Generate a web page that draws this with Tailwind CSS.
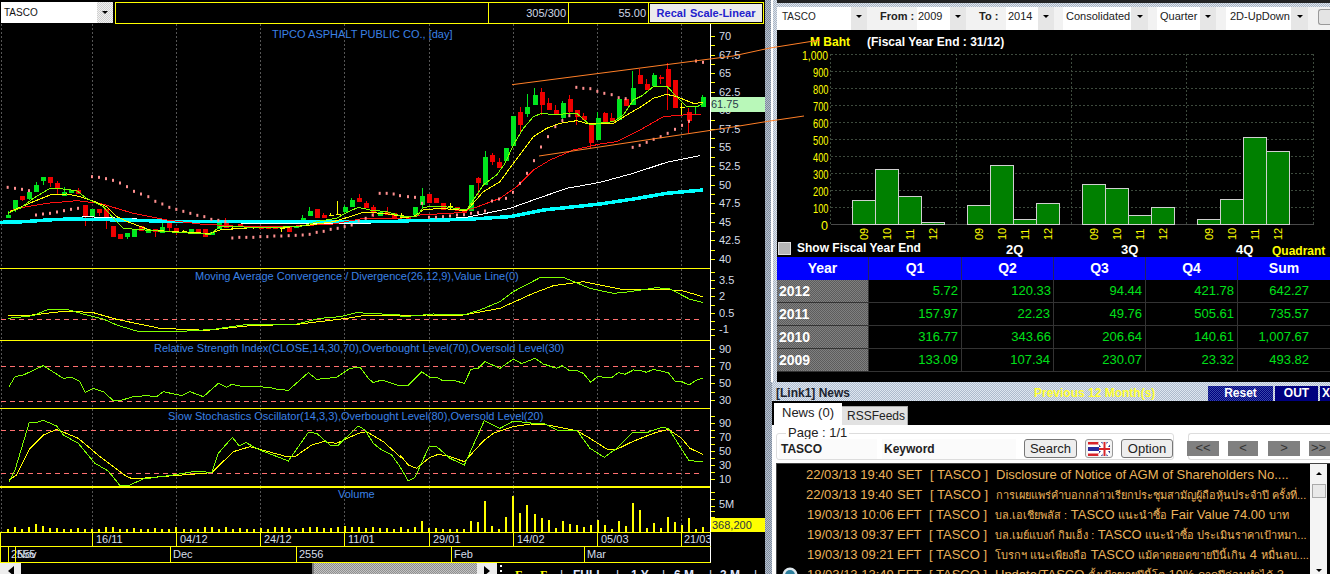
<!DOCTYPE html>
<html lang="en">
<head>
    <meta charset="UTF-8">
    <title>TASCO - Chart</title>
    <script src="https://cdn.jsdelivr.net/npm/@tailwindcss/browser@4"></script>
</head>
<body class="bg-black">
<div class="relative flex w-[1330px] h-[574px] overflow-hidden bg-black font-['Liberation_Sans','Noto_Sans',sans-serif] text-[11px]">

    <!-- left: price chart -->
    <div class="w-[765px] shrink-0 flex flex-col">
        <div class="h-[24px] flex items-start pt-[2px] pl-[1px] gap-[2px]">
            <div class="w-[112px] h-[21px] bg-white flex items-center justify-between text-[10px] text-[#111]">
                <span class="pl-[3px]">TASCO</span>
                <span class="w-[16px] h-full bg-[repeating-conic-gradient(#cfcfcf_0_25%,#f2f2f2_0_50%)] bg-[length:2px_2px] flex items-center justify-center"><i class="block border-x-[3px] border-t-[3px] border-x-transparent border-t-black"></i></span>
            </div>
            <div class="w-[649px] h-[22px] border border-[#ffff00] flex text-[#cfd8e6]">
                <div class="w-[373px] border-r border-[#ffff00]"></div>
                <div class="w-[80px] border-r border-[#ffff00] flex items-center justify-end pr-[2px]">305/300</div>
                <div class="w-[80px] border-r border-[#ffff00] flex items-center justify-end pr-[2px]">55.00</div>
                <div class="flex-1 m-[1px] bg-[#ececec] flex items-center justify-center font-bold text-[#2222cc] [word-spacing:1px]">Recal Scale-Linear</div>
            </div>
        </div>

        <svg id="pMain" class="block shrink-0" width="765" height="245" viewBox="0 24 765 245" font-size="11">
            <text x="272" y="38" fill="#3b82e6">TIPCO ASPHALT PUBLIC CO., [day]</text>
        </svg>
        <svg id="pMacd" class="block shrink-0" width="765" height="72" viewBox="0 269 765 72" font-size="11">
            <text x="195" y="280" fill="#3b82e6">Moving Average Convergence / Divergence(26,12,9),Value Line(0)</text>
        </svg>
        <svg id="pRsi" class="block shrink-0" width="765" height="68" viewBox="0 341 765 68" font-size="11">
            <text x="154" y="352" fill="#3b82e6">Relative Strength Index(CLOSE,14,30,70),Overbought Level(70),Oversold Level(30)</text>
        </svg>
        <svg id="pStoch" class="block shrink-0" width="765" height="78" viewBox="0 409 765 78" font-size="11">
            <text x="168" y="420" fill="#3b82e6">Slow Stochastics Oscillator(14,3,3),Overbought Level(80),Oversold Level(20)</text>
        </svg>
        <svg id="pVol" class="block shrink-0" width="765" height="45" viewBox="0 487 765 45" font-size="11">
            <text x="338" y="498" fill="#3b82e6">Volume</text>
        </svg>

        <!-- date axis -->
        <div class="w-[711px] h-[15px] flex border-y border-[#ffff00] border-r-white border-r text-[#d5dde8] overflow-hidden shrink-0">
            <div class="w-[92px] h-full border-l border-[#ffff00] shrink-0"></div>
            <div class="w-[84px] border-l border-[#ffff00] pl-[3px] shrink-0 leading-[13px]">16/11</div>
            <div class="w-[84px] border-l border-[#ffff00] pl-[3px] shrink-0 leading-[13px]">04/12</div>
            <div class="w-[84px] border-l border-[#ffff00] pl-[3px] shrink-0 leading-[13px]">24/12</div>
            <div class="w-[85px] border-l border-[#ffff00] pl-[3px] shrink-0 leading-[13px]">11/01</div>
            <div class="w-[84px] border-l border-[#ffff00] pl-[3px] shrink-0 leading-[13px]">29/01</div>
            <div class="w-[84px] border-l border-[#ffff00] pl-[3px] shrink-0 leading-[13px]">14/02</div>
            <div class="w-[84px] border-l border-[#ffff00] pl-[3px] shrink-0 leading-[13px]">05/03</div>
            <div class="w-[30px] border-l border-[#ffff00] pl-[2px] shrink-0 leading-[13px] whitespace-nowrap">21/03</div>
        </div>
        <div class="w-[711px] h-[16px] flex border-b border-[#ffff00] border-r-white border-r text-[#d5dde8] overflow-hidden shrink-0">
            <div class="w-[8px] h-full border-l border-[#ffff00] shrink-0"></div>
            <div class="w-[7px] border-l border-[#ffff00] pl-[2px] shrink-0 leading-[14px] whitespace-nowrap">2555</div>
            <div class="w-[155px] border-l border-[#ffff00] shrink-0 leading-[14px] pl-[1px]">Nov</div>
            <div class="w-[126px] border-l border-[#ffff00] shrink-0 leading-[14px] pl-[2px]">Dec</div>
            <div class="w-[155px] border-l border-[#ffff00] shrink-0 leading-[14px] pl-[2px]">2556</div>
            <div class="w-[133px] border-l border-[#ffff00] shrink-0 leading-[14px] pl-[2px]">Feb</div>
            <div class="flex-1 border-l border-[#ffff00] leading-[14px] pl-[2px]">Mar</div>
        </div>

        <!-- scrollbar and range buttons -->
        <div class="h-[11px] flex items-start shrink-0 overflow-visible">
            <div class="w-[21px] h-[16px] bg-[#eeeeee] flex items-center justify-center shrink-0"><i class="block border-y-[5px] border-r-[6px] border-y-transparent border-r-black"></i></div>
            <div class="w-[291px] h-[11px] bg-black shrink-0"></div>
            <div class="w-[165px] h-[11px] bg-[repeating-conic-gradient(#8f8f8f_0_25%,#c2c2c2_0_50%)] bg-[length:2px_2px] border-l-2 border-[#777777] shrink-0"></div>
            <div class="w-[20px] h-[16px] bg-[#eeeeee] flex items-center justify-center shrink-0"><i class="block border-y-[5px] border-l-[6px] border-y-transparent border-l-black"></i></div>
            <div class="relative flex-1 h-[11px] text-[#dfe6ff] font-bold text-[12px]">
                <span class="absolute left-[3px] top-[2px] w-[2px] h-[2px] bg-white"></span>
                <span class="absolute left-[3px] top-[7px] w-[2px] h-[2px] bg-white"></span>
                <span class="absolute left-[18px] top-[3px] text-[#ffff00] font-['Liberation_Serif',serif]">F</span>
                <span class="absolute left-[43px] top-[3px] text-[#ffff00] font-['Liberation_Serif',serif]">F</span>
                <span class="absolute left-[63px] top-[3px] font-normal">|</span>
                <span class="absolute left-[76px] top-[3px]">FULL</span>
                <span class="absolute left-[119px] top-[3px] font-normal">|</span>
                <span class="absolute left-[134px] top-[3px]">1 Y</span>
                <span class="absolute left-[165px] top-[3px] font-normal">|</span>
                <span class="absolute left-[177px] top-[3px]">6 M</span>
                <span class="absolute left-[212px] top-[3px] font-normal">|</span>
                <span class="absolute left-[223px] top-[3px]">3 M</span>
                <span class="absolute left-[257px] top-[3px] font-normal">|</span>
            </div>
        </div>
    </div>

    <!-- right -->
    <div class="w-[565px] shrink-0 flex flex-col bg-[#a9b4c4]">
        <!-- financials -->
        <div class="h-[382px] flex shrink-0">
            <div class="w-[12px] flex shrink-0">
                <div class="w-[6px] bg-[repeating-conic-gradient(#7f8a9a_0_25%,#b4bfce_0_50%)] bg-[length:2px_2px]"></div>
                <div class="w-[2px] bg-white"></div>
                <div class="w-[4px] bg-[repeating-conic-gradient(#aab5c4_0_25%,#dde4ec_0_50%)] bg-[length:2px_2px]"></div>
            </div>
            <div class="w-[553px] flex flex-col">
                <div class="h-[3px] bg-[#222222] shrink-0"></div>
                <div class="h-[4px] bg-[repeating-conic-gradient(#aab5c4_0_25%,#dde4ec_0_50%)] bg-[length:2px_2px] shrink-0"></div>
                <!-- filter bar -->
                <div class="h-[23px] bg-[#f2f2f2] flex items-center text-[11px] text-[#222222] shrink-0">
                    <div class="w-[74px] h-full bg-white flex items-center pl-[5px] pb-[5px] text-[10px]">TASCO</div>
                    <div class="w-[16px] h-full bg-[#e6e6e6] flex items-center justify-center pb-[5px]"><i class="block border-x-[3px] border-t-[3px] border-x-transparent border-t-black"></i></div>
                    <div class="w-[50px] pl-[13px] pb-[5px] font-bold">From :</div>
                    <div class="w-[33px] h-full bg-white flex items-center pl-[1px] pb-[5px]">2009</div>
                    <div class="w-[16px] h-full bg-[#e6e6e6] flex items-center justify-center pb-[5px]"><i class="block border-x-[3px] border-t-[3px] border-x-transparent border-t-black"></i></div>
                    <div class="w-[40px] pl-[13px] pb-[5px] font-bold">To :</div>
                    <div class="w-[32px] h-full bg-white flex items-center pl-[2px] pb-[5px]">2014</div>
                    <div class="w-[16px] h-full bg-[#e6e6e6] flex items-center justify-center pb-[5px]"><i class="block border-x-[3px] border-t-[3px] border-x-transparent border-t-black"></i></div>
                    <div class="w-[9px]"></div>
                    <div class="w-[68px] h-full bg-white flex items-center pl-[3px] pb-[5px]">Consolidated</div>
                    <div class="w-[17px] h-full bg-[#e6e6e6] flex items-center justify-center pb-[5px]"><i class="block border-x-[3px] border-t-[3px] border-x-transparent border-t-black"></i></div>
                    <div class="w-[9px]"></div>
                    <div class="w-[43px] h-full bg-white flex items-center pl-[3px] pb-[5px]">Quarter</div>
                    <div class="w-[16px] h-full bg-[#e6e6e6] flex items-center justify-center pb-[5px]"><i class="block border-x-[3px] border-t-[3px] border-x-transparent border-t-black"></i></div>
                    <div class="w-[10px]"></div>
                    <div class="w-[65px] h-full bg-white flex items-center pl-[4px] pb-[5px] whitespace-nowrap">2D-UpDown</div>
                    <div class="w-[17px] h-full bg-[#e6e6e6] flex items-center justify-center pb-[5px]"><i class="block border-x-[3px] border-t-[3px] border-x-transparent border-t-black"></i></div>
                    <div class="w-[10px]"></div>
                    <div class="flex-1 h-[16px] mb-[4px] border border-r-0 border-[#999999] rounded-l-[3px] bg-[#e4e4e4]"></div>
                </div>
                <svg id="pBars" class="block shrink-0 bg-black" width="553" height="227" viewBox="777 30 553 227" font-size="13"></svg>

                <!-- quarterly table -->
                <div class="grid grid-cols-[92px_93px_92px_92px_92px_92px] shrink-0 text-[14px] font-bold text-white text-center leading-[22px] bg-[#0000ff]">
                    <div class="h-[23px] border-r border-[#222266]">Year</div>
                    <div class="h-[23px] border-r border-[#222266]">Q1</div>
                    <div class="h-[23px] border-r border-[#222266]">Q2</div>
                    <div class="h-[23px] border-r border-[#222266]">Q3</div>
                    <div class="h-[23px] border-r border-[#222266]">Q4</div>
                    <div class="h-[23px]">Sum</div>
                </div>
                <div class="grid grid-cols-[92px_93px_92px_92px_92px_92px] auto-rows-[23px] shrink-0 text-[13px] text-[#00e01a] text-right leading-[22px] bg-black">
                    <div class="bg-[repeating-conic-gradient(#808080_0_25%,#5c5c5c_0_50%)] bg-[length:2px_2px] border-b border-r border-[#333333] text-left pl-[2px] text-[14px] font-bold text-white">2012</div>
                    <div class="border-b border-r border-[#333333] pr-[3px]">5.72</div>
                    <div class="border-b border-r border-[#333333] pr-[2px]">120.33</div>
                    <div class="border-b border-r border-[#333333] pr-[3px]">94.44</div>
                    <div class="border-b border-r border-[#333333] pr-[3px]">421.78</div>
                    <div class="border-b border-[#333333] pr-[21px]">642.27</div>
                    <div class="bg-[repeating-conic-gradient(#808080_0_25%,#5c5c5c_0_50%)] bg-[length:2px_2px] border-b border-r border-[#333333] text-left pl-[2px] text-[14px] font-bold text-white">2011</div>
                    <div class="border-b border-r border-[#333333] pr-[3px]">157.97</div>
                    <div class="border-b border-r border-[#333333] pr-[3px]">22.23</div>
                    <div class="border-b border-r border-[#333333] pr-[3px]">49.76</div>
                    <div class="border-b border-r border-[#333333] pr-[3px]">505.61</div>
                    <div class="border-b border-[#333333] pr-[21px]">735.57</div>
                    <div class="bg-[repeating-conic-gradient(#808080_0_25%,#5c5c5c_0_50%)] bg-[length:2px_2px] border-b border-r border-[#333333] text-left pl-[2px] text-[14px] font-bold text-white">2010</div>
                    <div class="border-b border-r border-[#333333] pr-[3px]">316.77</div>
                    <div class="border-b border-r border-[#333333] pr-[2px]">343.66</div>
                    <div class="border-b border-r border-[#333333] pr-[3px]">206.64</div>
                    <div class="border-b border-r border-[#333333] pr-[3px]">140.61</div>
                    <div class="border-b border-[#333333] pr-[21px]">1,007.67</div>
                    <div class="bg-[repeating-conic-gradient(#808080_0_25%,#5c5c5c_0_50%)] bg-[length:2px_2px] border-b border-r border-[#333333] text-left pl-[2px] text-[14px] font-bold text-white">2009</div>
                    <div class="border-b border-r border-[#333333] pr-[3px]">133.09</div>
                    <div class="border-b border-r border-[#333333] pr-[3px]">107.34</div>
                    <div class="border-b border-r border-[#333333] pr-[3px]">230.07</div>
                    <div class="border-b border-r border-[#333333] pr-[3px]">23.32</div>
                    <div class="border-b border-[#333333] pr-[21px]">493.82</div>
                </div>
                <div class="flex-1 bg-black"></div>
            </div>
        </div>

        <!-- news -->
        <div class="flex-1 flex min-h-0">
            <div class="w-[7px] bg-[repeating-conic-gradient(#7f8a9a_0_25%,#b4bfce_0_50%)] bg-[length:2px_2px] shrink-0"></div>
            <div class="w-[558px] flex flex-col">
                <div class="h-[19px] flex items-center pt-[3px] shrink-0 bg-[repeating-conic-gradient(#aebbcd_0_25%,#dfe7f0_0_50%)] bg-[length:2px_2px]">
                    <div class="w-[262px] pl-[4px] font-bold text-[12px] text-[#1c2430]">[Link1] News</div>
                    <div class="w-[174px] font-bold text-[12px] text-[#ffff33]">Previous 12 Month(s)</div>
                    <div class="w-[65px] h-[15px] bg-[repeating-conic-gradient(#00007f_0_25%,#3a4aa8_0_50%)] bg-[length:2px_2px] text-white font-bold text-[12px] text-center leading-[15px]">Reset</div>
                    <div class="w-[43px] h-[15px] ml-[2px] bg-[#00007f] text-white font-bold text-[12px] text-center leading-[15px]">OUT</div>
                    <div class="flex-1 h-[15px] ml-[2px] bg-[#00007f] text-white font-bold text-[12px] pl-[2px] leading-[15px]">X</div>
                </div>
                <div class="h-[24px] bg-black flex items-end pl-[2px] shrink-0">
                    <div class="w-[68px] h-[22px] bg-white text-[13px] text-[#222222] pl-[8px] leading-[19px]">News (0)</div>
                    <div class="w-[66px] h-[19px] bg-[#e2e2e2] border-t border-r border-[#aaaaaa] text-[12px] text-[#222222] pl-[5px] leading-[19px]">RSSFeeds</div>
                </div>
                <div class="flex-1 bg-white pl-[2px] min-h-0 flex flex-col">
                    <div class="relative h-[38px] shrink-0">
                        <div class="absolute left-[2px] right-[156px] top-[8px] h-[27px] border border-[#dddddd] rounded-[3px]"></div>
                        <div class="absolute left-[414px] right-0 top-[8px] h-[27px] border border-r-0 border-[#dddddd] rounded-l-[3px]"></div>
                        <div class="absolute left-[12px] top-[1px] px-[2px] bg-white text-[13px] leading-[14px] text-[#222222]">Page : 1/1</div>
                        <div class="absolute left-[5px] top-[14px] flex items-start text-[12px] font-bold text-[#222222]">
                            <div class="w-[98px] h-[20px] bg-[#fbfbfb] pl-[2px] leading-[20px]">TASCO</div>
                            <div class="w-[134px] h-[20px] ml-[5px] bg-[#fbfbfb] pl-[2px] leading-[20px]">Keyword</div>
                            <div class="w-[53px] h-[19px] ml-[8px] border border-[#777777] rounded-[3px] bg-[#eeeeee] text-[13px] font-normal text-center leading-[17px]">Search</div>
                            <div class="w-[28px] h-[19px] ml-[8px] border border-[#999999] rounded-[3px] bg-[#f2f2f2] flex items-center justify-center">
                                <svg width="22" height="14" viewBox="0 0 22 14">
                                    <rect width="11" height="14" fill="#d8232a"/>
                                    <rect y="2.5" width="11" height="9" fill="#ffffff"/>
                                    <rect y="5" width="11" height="4" fill="#2a2a9c"/>
                                    <rect x="11" width="11" height="14" fill="#2a2a8c"/>
                                    <path d="M11 0L22 14M22 0L11 14" stroke="#ffffff" stroke-width="3"/>
                                    <path d="M16.5 0V14M11 7H22" stroke="#ffffff" stroke-width="4"/>
                                    <path d="M16.5 0V14M11 7H22" stroke="#d8232a" stroke-width="2"/>
                                </svg>
                            </div>
                            <div class="w-[52px] h-[19px] ml-[8px] border border-[#777777] rounded-[3px] bg-[#eeeeee] text-[13px] font-normal text-center leading-[17px]">Option</div>
                            <div class="w-[32px] h-[15px] mt-[2px] ml-[14px] bg-[#808080] text-center leading-[14px] font-normal text-[13px] text-[#333333]">&lt;&lt;</div>
                            <div class="w-[30px] h-[15px] mt-[2px] ml-[9px] bg-[#808080] text-center leading-[14px] font-normal text-[13px] text-[#333333]">&lt;</div>
                            <div class="w-[32px] h-[15px] mt-[2px] ml-[10px] bg-[#808080] text-center leading-[14px] font-normal text-[13px] text-[#333333]">&gt;</div>
                            <div class="w-[24px] h-[15px] mt-[2px] ml-[9px] bg-[#808080] pl-[2px] leading-[14px] font-normal text-[13px] text-[#333333]">&gt;&gt;</div>
                        </div>
                    </div>
                    <!-- headlines -->
                    <div class="relative flex-1 ml-[2px] bg-black border-l border-t border-[#444444] text-[13px] text-[#ecb45c] whitespace-nowrap overflow-hidden pt-[1px]">
                        <div class="flex h-[20px] leading-[20px] pl-[29px]"><span class="w-[91px]">22/03/13 19:40</span><span class="w-[33px]">SET</span><span class="w-[66px]">[ TASCO ]</span><span>Disclosure of Notice of AGM of Shareholders No....</span></div>
                        <div class="flex h-[20px] leading-[20px] pl-[29px]"><span class="w-[91px]">22/03/13 19:40</span><span class="w-[33px]">SET</span><span class="w-[66px]">[ TASCO ]</span><span class="text-[11px]">การเผยแพร่คำบอกกล่าวเรียกประชุมสามัญผู้ถือหุ้นประจำปี ครั้งที่...</span></div>
                        <div class="flex h-[20px] leading-[20px] pl-[30px]"><span class="w-[90px]">19/03/13 10:06</span><span class="w-[32px]">EFT</span><span class="w-[66px]">[ TASCO ]</span><span><span class="text-[11px]">บล.เอเชียพลัส :</span> TASCO <span class="text-[11px]">แนะนำซื้อ</span> Fair Value 74.00 <span class="text-[11px]">บาท</span></span></div>
                        <div class="flex h-[20px] leading-[20px] pl-[30px]"><span class="w-[90px]">19/03/13 09:37</span><span class="w-[32px]">EFT</span><span class="w-[66px]">[ TASCO ]</span><span><span class="text-[11px]">บล.เมย์แบงก์ กิมเอ็ง :</span> TASCO <span class="text-[11px]">แนะนำซื้อ ประเมินราคาเป้าหมา...</span></span></div>
                        <div class="flex h-[20px] leading-[20px] pl-[30px]"><span class="w-[90px]">19/03/13 09:21</span><span class="w-[32px]">EFT</span><span class="w-[66px]">[ TASCO ]</span><span><span class="text-[11px]">โบรกฯ แนะเพียงถือ</span> TASCO <span class="text-[11px]">แม้คาดยอดขายปีนี้เกิน</span> 4 <span class="text-[11px]">หมื่นลบ....</span></span></div>
                        <div class="flex h-[20px] leading-[20px] pl-[30px]"><span class="w-[90px]">18/03/13 13:49</span><span class="w-[32px]">EFT</span><span class="w-[66px]">[ TASCO ]</span><span>Update/TASCO <span class="text-[11px]">ตั้งเป้าขายปีนี้โต</span> 10% <span class="text-[11px]">คาดปีก่อนทำได้</span> 3...</span></div>
                        <svg class="absolute left-[5px] top-[103px]" width="16" height="16" viewBox="0 0 16 16">
                            <circle cx="8" cy="8" r="7.5" fill="#dfe8ee"/>
                            <circle cx="8" cy="8" r="5" fill="#2d7f9e"/>
                        </svg>
                        <div class="absolute right-[3px] top-0 bottom-0 w-[17px] bg-[#f4f4f4] flex flex-col items-center pt-[8px]">
                            <i class="block border-x-[3px] border-b-[3px] border-x-transparent border-b-black"></i>
                            <div class="w-[14px] h-[14px] mt-[9px] bg-[#e9e9e9] border border-[#aaaaaa]"></div>
                            <i class="block mt-[71px] border-x-[3px] border-t-[3px] border-x-transparent border-t-black"></i>
                        </div>
                    </div>
                </div>
            </div>
        </div>
    </div>

    <!-- trend lines run across both panels -->
    <svg class="absolute inset-0 pointer-events-none" width="1330" height="574" viewBox="0 0 1330 574" fill="none" stroke="#ff7f27">
        <polyline points="512,84.7 733,56 770,48 820,40"/>
        <polyline points="539,156 733,127 770,121 804,116"/>
    </svg>
</div>

<script>
    const NS = 'http://www.w3.org/2000/svg';

    function add(svg, tag, attrs, text) {
        const el = document.createElementNS(NS, tag);
        for (const k in attrs) el.setAttribute(k, attrs[k]);
        if (text !== undefined) el.textContent = text;
        svg.appendChild(el);
        return el;
    }

    // points come as zoom coords: left half x/3, right half 400+x/3
    function pts(left, right, y0) {
        const out = [];
        for (let i = 0; i < left.length; i += 2) out.push((left[i] / 3) + ',' + (y0 + left[i + 1] / 3));
        for (let i = 0; i < right.length; i += 2) out.push((400 + right[i] / 3) + ',' + (y0 + right[i + 1] / 3));
        return out.join(' ');
    }

    function line(svg, left, right, y0, color, width) {
        add(svg, 'polyline', { points: pts(left, right, y0), fill: 'none', stroke: color, 'stroke-width': width || 1, 'shape-rendering': 'crispEdges' });
    }

    function grid(svg, y1, y2) {
        [1, 92, 176, 260, 344, 429, 513, 597, 681].forEach(x => {
            add(svg, 'line', { x1: x + .5, x2: x + .5, y1, y2, stroke: '#555555', 'stroke-dasharray': '2 2', 'shape-rendering': 'crispEdges' });
        });
    }

    function axis(svg, y1, y2, ticks, labels) {
        add(svg, 'line', { x1: 710.5, x2: 710.5, y1, y2, stroke: '#ffffff', 'shape-rendering': 'crispEdges' });
        ticks.forEach(y => add(svg, 'line', { x1: 711, x2: 715, y1: y + .5, y2: y + .5, stroke: '#ffff00', 'shape-rendering': 'crispEdges' }));
        labels.forEach(l => add(svg, 'text', { x: 719, y: l[1] + 4, fill: '#d5dde8' }, l[0]));
    }

    function hline(svg, y, color, x2) {
        add(svg, 'line', { x1: 0, x2: x2 || 710, y1: y + .5, y2: y + .5, stroke: color, 'shape-rendering': 'crispEdges' });
    }

    function dashed(svg, y) {
        add(svg, 'line', { x1: 1, x2: 703, y1: y + .5, y2: y + .5, stroke: '#ff7070', 'stroke-dasharray': '5 4', 'shape-rendering': 'crispEdges' });
    }

    const candleX = i => 8 + 7.02 * i;

    // main panel: colour, body top, body bottom, high, low (zoom px)
    const candles = [
        ['g',645,653,632,653],['g',600,630,600,637],['r',588,600,588,603],['g',575,596,575,600],['g',555,575,545,575],
        ['g',531,542,531,555],['r',531,549,531,560],['r',549,565,543,582],['g',575,587,560,587],['g',570,580,570,580],
        ['r',570,582,564,582],['r',615,647,615,678],['g',628,650,628,650],['r',628,640,628,648],['r',628,650,628,687],
        ['r',678,710,678,710],['r',703,717,703,717],['g',699,710,699,716],['g',690,710,687,710],['r',678,693,678,693],
        ['g',686,698,686,698],['r',687,697,687,710],['g',682,698,665,698],['r',665,685,665,695],['r',684,697,684,705],
        ['y',695,696,690,700],['g',688,698,688,698],['r',688,700,688,700],['r',688,710,688,710],['g',695,705,695,705],
        ['g',668,688,660,688],['r',668,683,655,683],['y',684,685,680,688],['r',672,680,672,680],['y',683,684,678,688],
        ['y',682,683,678,688],['r',680,686,680,686],['r',680,688,680,688],['r',680,688,680,688],['y',685,686,682,697],
        ['r',680,697,680,697],['g',678,684,678,684],['g',655,670,645,670],['g',633,647,620,647],['r',628,655,628,655],
        ['r',645,655,640,655],['y',647,648,640,648],['y',643,644,603,644],['g',620,635,615,640],['g',600,622,593,622],
        ['r',595,606,582,606],['r',608,625,603,625],['r',622,640,615,650],['g',635,648,635,648],['r',637,645,622,645],
        ['r',640,655,640,655],['y',645,646,640,652],['r',650,656,650,656],['g',622,645,622,650],['g',588,615,563,625],
        ['r',582,608,582,608],['r',595,608,595,608],['r',610,630,610,630],['y',620,621,610,630],['r',622,633,622,633],
        ['r',630,640,630,640],['g',555,632,555,632],['r',535,550,530,585],['g',470,555,453,555],['r',465,485,458,495],
        ['r',485,503,475,503],['g',443,482,443,482],['g',347,437,347,437],['r',335,375,322,400],['g',320,343,282,350],
        ['g',285,315,264,315],['r',275,315,265,345],['r',308,330,295,330],['r',330,345,315,345],['g',308,354,303,360],
        ['r',297,337,285,348],['r',330,350,330,375],['r',347,360,340,360],['r',375,430,375,445],['g',353,420,335,420],
        ['r',340,368,335,368],['r',353,365,340,365],['g',297,360,290,360],['r',297,318,293,318],['g',264,315,213,315],
        ['r',225,253,207,253],['r',252,270,238,270],['g',225,257,220,257],['r',230,238,225,252],['r',207,262,188,330],
        ['r',240,323,240,323],['y',323,324,310,345],['r',337,363,325,400],['g',317,322,317,345],['g',292,320,286,320]
    ];
    const candleColor = { g: '#00e61e', r: '#f00000', y: '#ffff00' };

    const sarLeft = [23,562,45,565,66,568,87,572,108,645,129,642,150,640,171,636,192,632,213,628,234,625,276,530,297,532,318,536,339,541,360,549,381,560,402,574,423,582,445,590,466,604,487,612,508,622,529,628,550,634,571,640,592,646,613,650,634,658,655,661,676,665,697,714,718,712,739,712,760,712,781,710,802,710,823,708,844,708,866,707,887,706,908,705,929,703,950,697,971,694,992,688,1013,685,1034,680,1055,675,1076,663,1097,655,1118,645,1139,580,1160,580,1181,582];
    const sarRight = [0,587,24,590,45,592,66,610,87,652,108,652,129,650,150,648,171,645,192,644,213,640,234,638,255,633,276,603,297,597,318,595,339,577,360,550,381,520,402,482,423,441,444,410,466,380,487,362,508,347,529,262,550,265,571,266,592,274,613,280,635,284,656,293,677,296,698,442,719,436,740,427,761,418,782,410,803,400,825,388,846,376,867,364,888,183,909,187];

    const main = document.getElementById('pMain');
    grid(main, 24, 268);
    candles.forEach((c, i) => {
        const x = candleX(i), col = candleColor[c[0]];
        add(main, 'line', { x1: x, x2: x, y1: c[3] / 3, y2: c[4] / 3, stroke: col, 'shape-rendering': 'crispEdges' });
        if (c[0] === 'y') add(main, 'line', { x1: x - 2, x2: x + 3, y1: c[1] / 3, y2: c[1] / 3, stroke: col, 'shape-rendering': 'crispEdges' });
        else add(main, 'rect', { x: x - 2, y: c[1] / 3, width: 5, height: (c[2] - c[1]) / 3, fill: col, 'shape-rendering': 'crispEdges' });
    });
    line(main, [160,657,260,650,410,657,750,670,850,672,1200,668], [0,665,200,652,330,625,400,600,500,565,600,547,700,520,800,487,900,467], 0, '#ffffff');
    line(main, [0,667,75,665,140,660,205,657,370,660,540,665,1200,665], [0,663,200,658,330,650,430,630,600,612,700,597,800,580,910,570], 0, '#00ffff', 3.5);
    line(main, [30,632,80,620,140,610,230,602,300,610,400,640,500,660,600,672,700,678,850,680,1000,672,1080,657,1200,655], [0,655,60,645,180,638,220,625,300,595,350,560,400,510,450,480,520,450,600,432,650,425,720,390,790,350,850,345,905,342], 0, '#ff1010');
    line(main, [30,635,60,622,100,605,150,585,200,582,240,590,280,603,320,620,350,650,390,668,450,690,550,697,630,700,660,690,750,683,850,683,930,675,1000,665,1050,650,1090,637,1150,640,1200,648], [0,653,40,650,70,630,120,625,200,632,250,575,300,545,340,490,400,410,440,385,480,370,530,362,560,370,590,372,640,370,680,345,720,322,760,295,800,283,830,290,880,310,910,308], 0, '#ffff00');
    line(main, [23,640,60,625,100,595,150,565,190,567,230,572,260,595,310,620,345,660,370,685,500,695,630,703,660,680,800,682,900,680,960,663,1010,655,1035,640,1075,622,1110,630,1160,635,1200,647], [0,650,50,650,70,622,120,618,200,630,220,600,250,555,290,525,315,490,340,435,370,385,400,350,425,340,470,345,500,340,530,340,570,375,610,368,640,365,670,345,700,300,725,288,760,260,800,258,830,290,860,320,890,320,910,310], 0, '#7fff00');
    for (let i = 0; i < sarLeft.length; i += 2) add(main, 'rect', { x: sarLeft[i] / 3 - 1, y: sarLeft[i + 1] / 3 - 1.5, width: 2, height: 3, fill: '#ff9090' });
    for (let i = 0; i < sarRight.length; i += 2) add(main, 'rect', { x: 400 + sarRight[i] / 3 - 1, y: sarRight[i + 1] / 3 - 1.5, width: 2, height: 3, fill: '#ff9090' });
    hline(main, 268, '#ffff00');
    const mainTicks = [], mainLabels = [];
    for (let i = 0; i < 25; i++) mainTicks.push(Math.round(36 + 9.29 * i));
    ['70','67.5','65','62.5','60','57.5','55','52.5','50','47.5','45','42.5','40'].forEach((l, i) => mainLabels.push([l, 36 + 18.58 * i]));
    axis(main, 24, 269, mainTicks, mainLabels);
    add(main, 'rect', { x: 711, y: 97, width: 54, height: 15, fill: '#b9f8b9' });
    add(main, 'text', { x: 711, y: 108, fill: '#2a3a4a' }, '61.75');

    const macd = document.getElementById('pMacd');
    grid(macd, 269, 341);
    dashed(macd, 319);
    line(macd, [25,153,80,152,200,138,280,143,350,163,480,190,620,196,740,183,900,177,1040,160,1100,150,1200,152], [0,153,80,150,190,150,300,130,400,85,460,62,550,50,660,72,780,72,850,78,908,95], 265, '#ffff00');
    line(macd, [25,160,100,152,140,135,200,133,250,147,310,162,350,180,410,198,560,198,640,193,730,180,890,177,960,160,1020,155,1070,143,1200,150], [0,155,50,152,100,147,190,150,240,135,300,110,340,80,420,38,490,37,570,70,640,85,690,80,770,68,810,72,870,103,908,112], 265, '#7fff00');
    hline(macd, 340, '#ffff00');
    axis(macd, 269, 341, [272,280,288,296,305,313,321,329,335], [['3.5',280],['2',296],['0.5',313],['-1',329]]);

    const rsi = document.getElementById('pRsi');
    grid(rsi, 341, 409);
    dashed(rsi, 366);
    dashed(rsi, 401);
    line(rsi, [27,365,45,335,70,330,130,302,190,340,215,337,240,350,255,382,280,370,310,380,340,407,360,407,400,395,440,392,470,395,490,380,545,392,570,380,610,395,655,355,680,367,695,358,720,363,810,367,830,373,865,376,925,323,950,343,1010,337,1050,310,1080,307,1105,340,1120,353,1145,345,1190,360,1200,360], [0,360,25,360,65,320,90,337,110,337,130,348,160,346,193,355,213,313,235,310,255,290,300,310,340,282,365,296,405,280,430,297,470,310,487,302,510,318,530,316,550,325,572,352,592,335,635,338,655,323,675,328,700,315,720,316,740,322,760,313,805,323,825,348,845,350,867,360,890,345,908,340], 265, '#7fff00');
    hline(rsi, 408, '#ffff00');
    axis(rsi, 341, 409, [349,358,366,375,383,392,400], [['90',349],['70',366],['50',383],['30',400]]);

    const stoch = document.getElementById('pStoch');
    grid(stoch, 409, 487);
    dashed(stoch, 430);
    dashed(stoch, 473);
    line(stoch, [27,645,50,630,90,550,130,510,170,493,235,520,300,575,380,635,400,642,520,632,635,623,700,560,750,545,860,575,885,575,935,540,970,530,1010,535,1075,505,1100,500,1150,530,1200,575], [0,570,25,600,50,610,88,578,115,568,150,575,193,590,253,525,280,505,340,485,390,477,430,478,470,485,530,497,570,520,620,552,650,553,697,530,760,505,805,493,845,520,870,550,908,568], 265, '#ffff00');
    line(stoch, [27,652,45,615,88,472,110,472,130,466,170,483,190,510,235,535,285,595,325,618,360,662,385,662,430,642,520,630,590,618,635,623,655,565,697,517,718,543,738,533,780,555,865,588,925,502,950,505,990,540,1015,540,1075,483,1095,495,1120,535,1145,555,1175,570,1200,605], [0,605,25,648,45,637,88,543,108,543,150,580,193,600,253,467,300,490,340,468,400,475,430,475,470,495,530,495,570,550,613,577,650,550,697,503,740,503,785,487,805,490,867,587,908,590], 265, '#7fff00');
    hline(stoch, 486, '#ffff00');
    axis(stoch, 409, 487, [416,423,430,437,444,451,458,465,472,479], [['90',423],['70',437],['50',451],['30',465],['10',479]]);

    const vol = document.getElementById('pVol');
    grid(vol, 487, 532);
    const volumes = [3,5,3,5,8,6,4,4,3,3,4,3,3,3,5,5,3,3,4,3,3,4,3,3,5,3,3,3,5,5,3,5,3,4,3,3,4,3,5,5,4,3,4,5,5,4,4,5,6,5,5,4,5,4,4,3,5,3,5,11,4,4,3,3,3,3,11,10,31,6,3,15,36,19,27,18,14,12,4,11,8,7,5,7,12,7,3,11,6,29,22,4,9,4,15,10,7,14,3,5];
    volumes.forEach((h, i) => add(vol, 'rect', { x: candleX(i) - 1, y: 532 - h, width: 2, height: h, fill: '#ffff00', 'shape-rendering': 'crispEdges' }));
    hline(vol, 487, '#ffff00');
    axis(vol, 487, 532, [492,499,506,511,517], [['5M',504]]);
    add(vol, 'rect', { x: 711, y: 518, width: 54, height: 14, fill: '#ffff00' });
    add(vol, 'text', { x: 712, y: 529, fill: '#2a3340' }, '368,200');

    // quarterly bars
    const bars = document.getElementById('pBars');
    const barRows = [
        [852.5, [200.3, 169.3, 196.3, 222.3]],
        [967.5, [205.3, 165.3, 219.3, 203.3]],
        [1082.5, [184.3, 188.3, 215.3, 207.3]],
        [1197.5, [219.3, 199.3, 137.3, 151.3]]
    ];
    for (let i = 0; i <= 10; i++) {
        const y = Math.round(54 + 17.03 * i) + .5;
        add(bars, 'line', { x1: 830.5, x2: 1313.5, y1: y, y2: y, stroke: i === 10 ? '#4a4a4a' : '#3d4a3d', 'stroke-dasharray': i === 10 ? '' : '2 2', 'shape-rendering': 'crispEdges' });
        const val = i === 0 ? '1,000' : String((10 - i) * 100);
        add(bars, 'text', { x: i === 0 ? 802 : (i === 10 ? 821 : 813), y: y + 5, fill: '#ffff00', textLength: i === 0 ? 26 : (i === 10 ? 7 : 15.5), lengthAdjust: 'spacingAndGlyphs' }, val);
    }
    [830.5, 956.5, 1071.5, 1186.5, 1313.5].forEach(x => add(bars, 'line', { x1: x, x2: x, y1: 54, y2: 224, stroke: '#3d4a3d', 'stroke-dasharray': '2 2', 'shape-rendering': 'crispEdges' }));
    barRows.forEach(r => {
        r[1].forEach((top, i) => {
            const x = r[0] + 23 * i;
            add(bars, 'rect', { x, y: top, width: 23, height: 224.3 - top, fill: '#008000', stroke: '#d0d0d0', 'shape-rendering': 'crispEdges' });
            const cx = x + 15.5;
            add(bars, 'text', { x: cx, y: 240, fill: '#ffff00', 'font-size': 11, transform: 'rotate(-90 ' + cx + ' 240)' }, ['09', '10', '11', '12'][i]);
        });
    });
    add(bars, 'text', { x: 810, y: 46, fill: '#ffff00', 'font-weight': 'bold', 'font-size': 12 }, 'M Baht');
    add(bars, 'text', { x: 867, y: 46, fill: '#ffffff', 'font-weight': 'bold', 'font-size': 12 }, '(Fiscal Year End : 31/12)');
    add(bars, 'rect', { x: 778.5, y: 242.5, width: 12, height: 12, fill: '#b4b4b4', stroke: '#e0e0e0' });
    add(bars, 'text', { x: 797, y: 252, fill: '#ffffff', 'font-weight': 'bold', 'font-size': 12 }, 'Show Fiscal Year End');
    [['2Q', 1006], ['3Q', 1121], ['4Q', 1236]].forEach(q => add(bars, 'text', { x: q[1], y: 254, fill: '#ffffff', 'font-weight': 'bold', 'font-size': 13 }, q[0]));
    add(bars, 'text', { x: 1272, y: 255, fill: '#ffff00', 'font-weight': 'bold', 'font-size': 12 }, 'Quadrant');
</script>
</body>
</html>
